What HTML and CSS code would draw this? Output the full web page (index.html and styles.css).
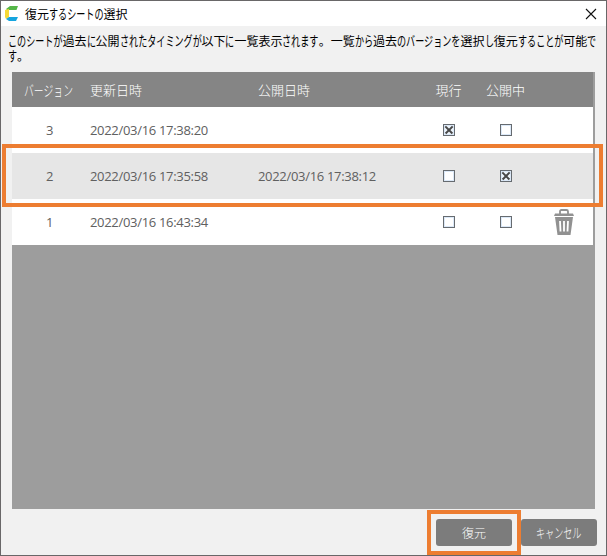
FILE: index.html
```html
<!DOCTYPE html>
<html lang="ja">
<head>
<meta charset="utf-8">
<title>復元するシートの選択</title>
<link rel="stylesheet" href="styles.css">
</head>
<body>
<div class="window">
  <header class="titlebar">
    <svg class="logo" width="14" height="15" viewBox="0 0 14 15"><path d="M1 3L5 0H13L11.5 4H4V6Z" fill="#55b749"/><path d="M0 4L4 3V11L1 13L0 11Z" fill="#f6d936"/><path d="M4 11H13L11 15H4L1 13Z" fill="#15a5df"/></svg>
    <h1 class="title">復元<span class="kana n6">するシートの</span>選択</h1>
    <svg class="close" width="12" height="12" viewBox="0 0 12 12"><path d="M1 1L11 11M11 1L1 11" stroke="#111" stroke-width="1.1" fill="none"/></svg>
  </header>
  <p class="message"><span class="kana n6">このシートが</span>過去<span class="kana n1">に</span>公開<span class="kana n9">されたタイミングが</span>以下<span class="kana n1">に</span>一覧表示<span class="kana n4">されます</span>。一覧<span class="kana n2">から</span>過去<span class="kana n7">のバージョンを</span>選択<span class="kana n1">し</span>復元<span class="kana n5">することが</span>可能<span class="kana n1">で</span><br><span class="kana n1">す</span>。</p>
  <main class="grid">
    <div class="row head"><span class="version"><span class="kana n5">バージョン</span></span><span>更新日時</span><span>公開日時</span><span class="mid">現行</span><span class="mid">公開中</span><span></span></div>
    <div class="row"><span class="version">3</span><span>2022/03/16 17:38:20</span><span></span><span class="mid"><i class="check on"></i></span><span class="mid"><i class="check"></i></span><span></span></div>
    <div class="row selected"><span class="version">2</span><span>2022/03/16 17:35:58</span><span>2022/03/16 17:38:12</span><span class="mid"><i class="check"></i></span><span class="mid"><i class="check on"></i></span><span></span></div>
    <div class="row"><span class="version">1</span><span>2022/03/16 16:43:34</span><span></span><span class="mid"><i class="check"></i></span><span class="mid"><i class="check"></i></span><span class="trash"><svg width="20" height="26" viewBox="0 0 20 26"><path d="M6 5V2.5Q6 1 7.5 1H12.5Q14 1 14 2.5V5" fill="none" stroke="#919191" stroke-width="1.8"/><path d="M1 4.5H19L20 7H0ZM1 8H19L16.5 26H3.5Z" fill="#919191"/><path d="M6 12L6.5 22.5M10 12V22.5M14 12L13.5 22.5" stroke="#fff" stroke-width="1.8"/></svg></span></div>
  </main>
  <footer class="actions">
    <button class="button">復元</button>
    <button class="button"><span class="kana n5">キャンセル</span></button>
  </footer>
</div>
<div class="mark mark-row"></div>
<div class="mark mark-button"></div>
</body>
</html>
```
FILE: styles.css
```css
* { box-sizing: border-box; }
body {
  margin: 0;
  width: 607px;
  height: 556px;
  padding: 1px;
  overflow: hidden;
  background: #696768;
  font: 12px/15px "Noto Sans CJK JP", sans-serif;
  color: #000;
}
.window {
  width: 605px;
  height: 554px;
  display: flex;
  flex-direction: column;
  background: #f1f1f1;
}
.titlebar {
  height: 25px;
  flex: none;
  display: flex;
  align-items: center;
  padding: 0 9px 0 4px;
  background: #fff;
}
.title { margin: 0 auto 0 6px; font-size: 12px; font-weight: 400; }
/* Narrow kana next to full-width kanji */
.kana {
  display: inline-block;
  width: calc(var(--n) * .673em);
  font-size: 1.125em;
  line-height: 15px;
  height: 15px;
  vertical-align: top;
  white-space: nowrap;
  transform: scaleX(.673);
  transform-origin: 0 50%;
}
.n1 { --n: 1; }
.n2 { --n: 2; }
.n4 { --n: 4; }
.n5 { --n: 5; }
.n6 { --n: 6; }
.n7 { --n: 7; }
.n9 { --n: 9; }
.message { height: 46px; flex: none; margin: 0; padding: 7px 0 0 7px; white-space: nowrap; }
.grid {
  width: 583px;
  height: 437px;
  margin-left: 11px;
  padding-right: 2px;
  background: #9d9d9d;
}
.row {
  height: 46px;
  display: grid;
  grid-template-columns: 78px 168px 162px 57px 57px 59px;
  align-items: center;
  background: #fff;
  color: #606060;
  font-family: "Open Sans", "Noto Sans CJK JP", sans-serif;
  font-size: 13px;
  letter-spacing: -.31px;
}
.head {
  height: 35px;
  background: #858585;
  color: #fff;
  font-family: "Noto Sans CJK JP", sans-serif;
  font-weight: 300;
  letter-spacing: 0;
}
.selected { background: #e6e6e6; }
.version { text-align: center; padding-right: 3px; }
.head .version { padding-right: 5px; }
.mid { display: flex; justify-content: center; }
.check {
  position: relative;
  width: 12px;
  height: 12px;
  border: 1px solid #666b70;
  background: #fff;
  box-shadow: inset 1px 1px #dce9f8, inset -1px -1px #dce9f8;
}
.on { background: #eef5fc; }
.on::before, .on::after {
  content: "";
  position: absolute;
  left: 0;
  top: 4px;
  width: 10px;
  height: 1.6px;
  background: #484848;
  transform: rotate(45deg);
}
.on::after { transform: rotate(-45deg); }
.trash { display: flex; padding-left: 20px; }
.actions { display: flex; justify-content: flex-end; gap: 9px; padding: 10px 9px 0 0; }
.button {
  width: 76px;
  height: 27px;
  padding: 0;
  border: 0;
  border-radius: 3px;
  background: #7c7c7c;
  color: #fff;
  font: 300 12px/15px "Noto Sans CJK JP", sans-serif;
}
.mark { position: absolute; border: 4px solid #ed7d31; }
.mark-row { left: 2px; top: 144px; width: 601px; height: 63px; }
.mark-button { left: 427px; top: 510px; width: 94px; height: 45px; }
```
